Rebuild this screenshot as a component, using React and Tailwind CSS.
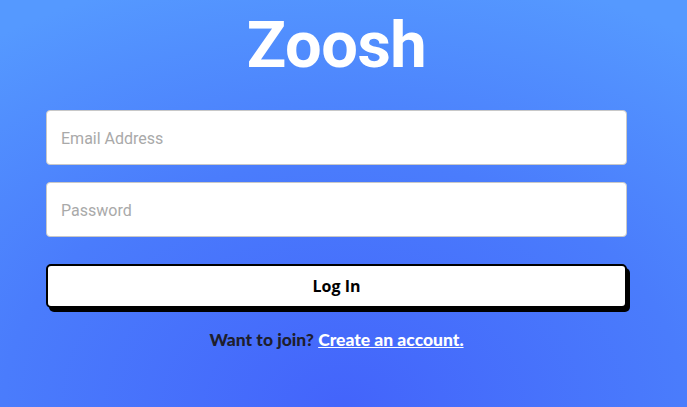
import React from "react";

const App = () => {
  return (
    <div className="min-h-[407px] w-full bg-[radial-gradient(ellipse_90%_110%_at_50%_100%,#4364fb_0%,#4a7cfc_55%,#5599ff_100%)]">
      <div className="w-[673px] flex flex-col items-center">
        <h1 className="mt-[6px] text-white text-[65px] leading-[78px] font-bold font-['Roboto',sans-serif] tracking-[-0.5px]">
          Zoosh
        </h1>

        <form className="w-full px-[46px] mt-[26px] flex flex-col">
          <input
            type="email"
            placeholder="Email Address"
            className="h-[55px] w-full bg-white border border-[#c8c8c8] rounded-[4px] px-[14px] pt-[1px] text-[16px] font-['Roboto',sans-serif] placeholder:text-[#a9a9a9] outline-none"
          />
          <input
            type="password"
            placeholder="Password"
            className="mt-[17px] h-[55px] w-full bg-white border border-[#c8c8c8] rounded-[4px] px-[14px] pt-[1px] text-[16px] font-['Roboto',sans-serif] placeholder:text-[#a9a9a9] outline-none"
          />
          <button
            type="button"
            className="mt-[27px] h-[44px] w-full bg-white border-2 border-black rounded-[5px] shadow-[3px_4px_0_#000] text-[16px] font-bold text-black font-['Open_Sans',sans-serif]"
          >
            Log In
          </button>
        </form>

        <p className="mt-[19px] text-[17.5px] font-black text-[#1e1e2e] font-['Lato',sans-serif]">
          Want to join?{" "}
          <a href="#" className="text-white underline">
            Create an account.
          </a>
        </p>
      </div>
    </div>
  );
};

export default App;
